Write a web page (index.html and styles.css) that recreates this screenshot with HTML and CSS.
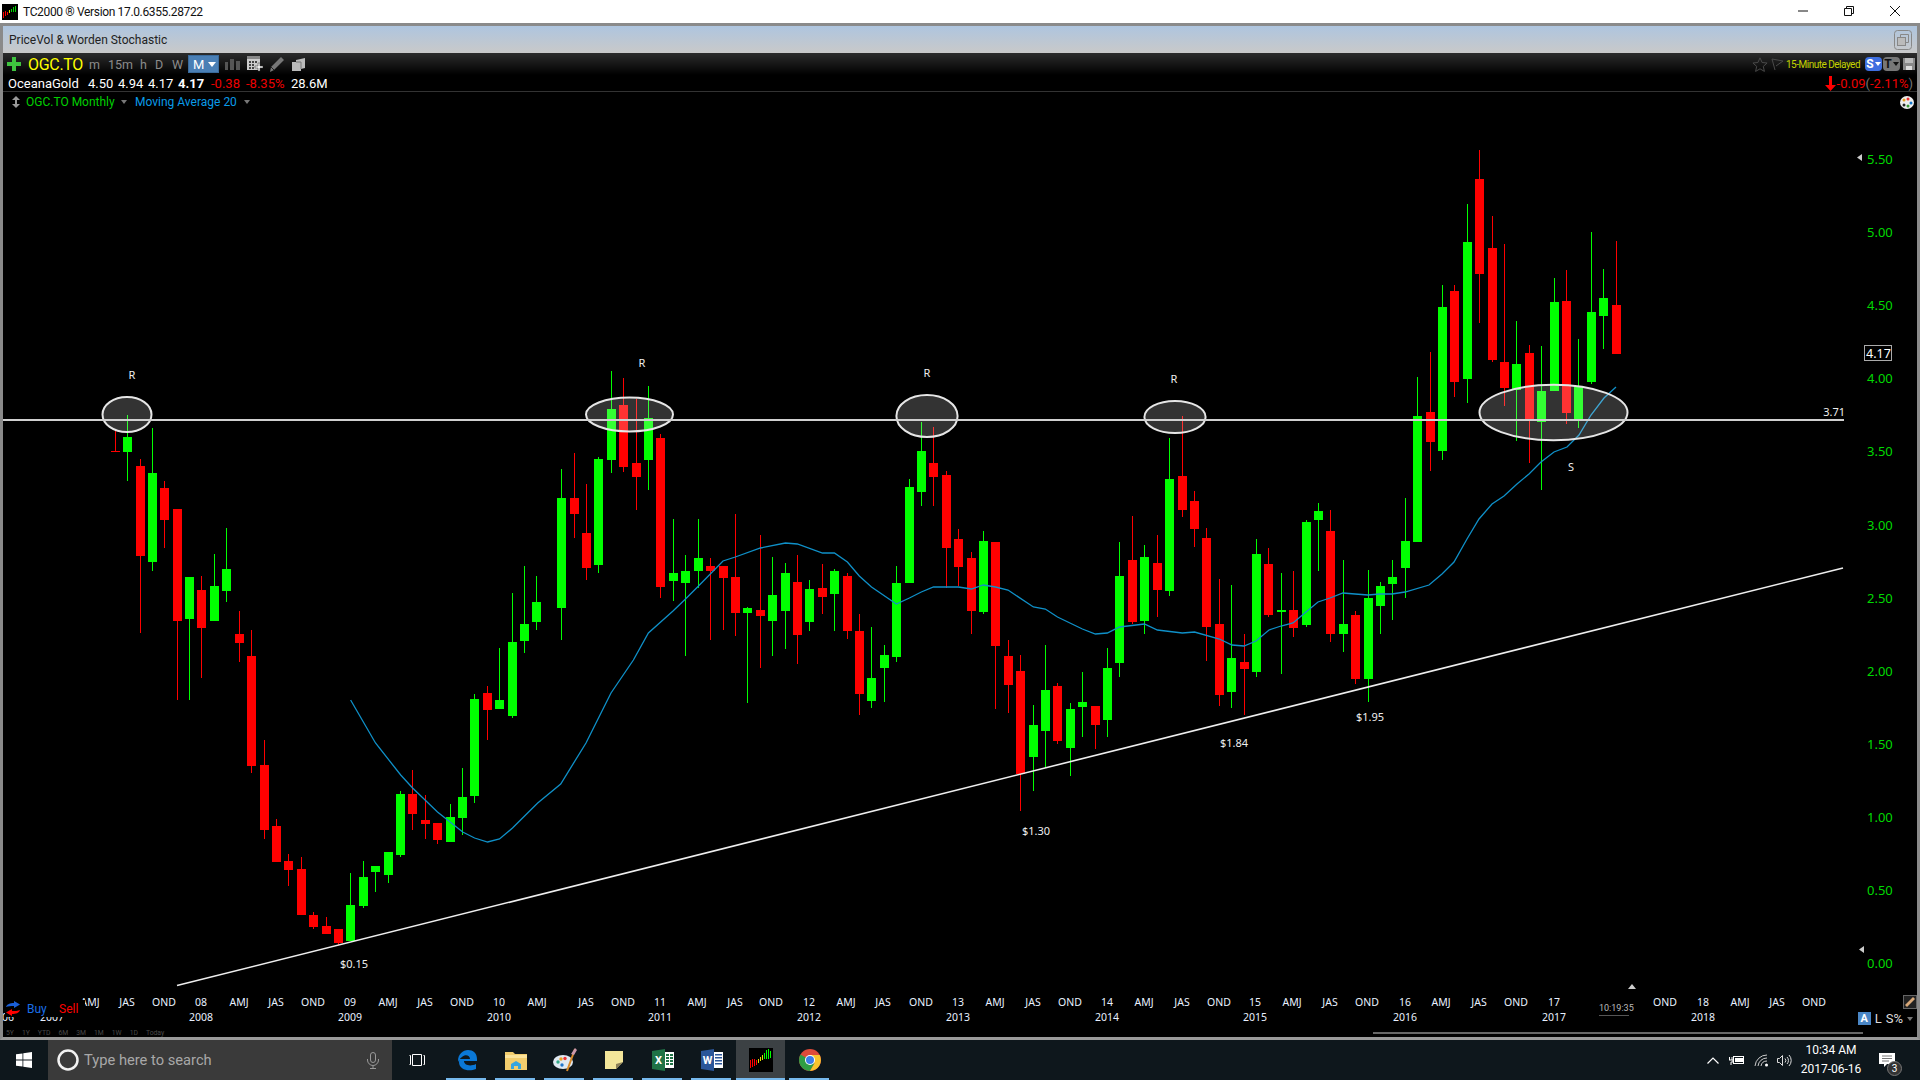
FILE: index.html
```html
<!DOCTYPE html>
<html lang="en">
<head>
<meta charset="utf-8">
<title>TC2000</title>
<link rel="stylesheet" href="styles.css">
</head>
<body>
<header class="titlebar">
  <svg class="app-icon" width="16" height="16" viewBox="0 0 16 16"><rect width="16" height="16" fill="#000"/><path d="M1 8h1v6H1zM3 7h1v5H3zM5 8h1v3H5z" fill="#f00"/><path d="M7 6h1v3H7z" fill="#dd0"/><path d="M9 5h1v3H9zM11 3h1v5h-1zM13 2h1v6h-1z" fill="#0d0"/></svg>
  <span class="app-title">TC2000 ® Version 17.0.6355.28722</span>
  <div class="win-controls">
    <svg width="12" height="12" viewBox="0 0 12 12"><path d="M1 6h10" stroke="#111" fill="none"/></svg>
    <svg width="12" height="12" viewBox="0 0 12 12"><path d="M1.500 3.500h7v7h-7zM3.500 3.500v-2h7v7h-2" stroke="#111" fill="none"/></svg>
    <svg width="12" height="12" viewBox="0 0 12 12"><path d="M1 1l10 10M11 1L1 11" stroke="#111" fill="none"/></svg>
  </div>
</header>

<main class="window">
  <div class="panel-head">
    <span>PriceVol &amp; Worden Stochastic</span>
    <svg class="panel-btn" width="18" height="20" viewBox="0 0 18 20"><rect x=".5" y=".5" width="17" height="19" rx="3" fill="none" stroke="#888"/><path d="M6.500 4.500h8v8h-8z" fill="none" stroke="#888"/><rect x="3.500" y="7.500" width="8" height="8" fill="#bbb" stroke="#888"/></svg>
  </div>

  <div class="tool-row">
    <svg class="plus" width="14" height="14" viewBox="0 0 14 14"><path d="M5 0h4v5h5v4H9v5H5V9H0V5h5z" fill="#3fc43f"/></svg>
    <span class="symbol">OGC.TO</span>
    <span class="tf tf-m">m</span>
    <span class="tf tf-15">15m</span>
    <span class="tf tf-h">h</span>
    <span class="tf tf-d">D</span>
    <span class="tf tf-w">W</span>
    <span class="tf-active">M<i class="caret-white"></i></span>
    <svg class="ic-bars" width="15" height="11" viewBox="0 0 15 11"><path d="M0 3h3v8H0zM5 0h4v11H5zM11 2h4v9h-4z" fill="#555"/></svg>
    <svg class="ic-cal" width="16" height="16" viewBox="0 0 16 16"><rect x="0" y="0" width="13" height="14" fill="#ccc"/><rect x="0" y="0" width="13" height="3" fill="#888"/><path d="M2 5h2v2H2zM5 5h2v2H5zM8 5h2v2H8zM2 8h2v2H2zM5 8h2v2H5zM2 11h2v2H2zM5 11h2v2H5z" fill="#444"/><path d="M11 7h2v3h3v2h-3v3h-2v-3H8v-2h3z" fill="#eee" stroke="#333" stroke-width=".5"/></svg>
    <svg class="ic-pen" width="14" height="15" viewBox="0 0 14 15"><path d="M11 0l3 3L4 13l-4 2 1-5z" fill="#777"/><path d="M1 10l3 3" stroke="#222"/></svg>
    <svg class="ic-folder" width="14" height="13" viewBox="0 0 14 13"><path d="M0 4h4V2l9-2v10l-4 1v2H0z" fill="#bbb"/><path d="M4 4h5v7" stroke="#777" fill="none"/></svg>
    <div class="tool-right">
      <svg class="ic-star" width="16" height="15" viewBox="0 0 16 15"><path d="M8 .8l2.100 4.700 5 .5-3.800 3.400 1.100 5L8 11.800l-4.400 2.600 1.100-5L.9 6l5-.5z" fill="none" stroke="#4a4a4a"/></svg>
      <svg class="ic-flag" width="13" height="13" viewBox="0 0 13 13"><path d="M1 1l11 2-7 5M1 1l3 11" fill="none" stroke="#4a4a4a"/></svg>
      <span class="delayed">15-Minute Delayed</span>
      <span class="btn-s">S<i class="caret-white small"></i></span>
      <span class="btn-t">T<i class="caret-dark small"></i></span>
      <svg class="ic-save" width="12" height="12" viewBox="0 0 12 12"><path d="M0 0h12v12H0z" fill="#888"/><path d="M2 0h8v5H2z" fill="#bbb"/><path d="M3 8h6v4H3z" fill="#ddd"/></svg>
    </div>
  </div>

  <div class="quote-row">
    <span class="q-name">OceanaGold</span>
    <span class="q">4.50</span>
    <span class="q">4.94</span>
    <span class="q">4.17</span>
    <strong class="q-last">4.17</strong>
    <span class="q-red q-chg">-0.38</span>
    <span class="q-red q-pct">-8.35%</span>
    <span class="q-vol">28.6M</span>
    <div class="quote-right">
      <svg width="11" height="15" viewBox="0 0 11 15"><path d="M4 0h3v9h4l-5.500 6L0 9h4z" fill="#f00"/></svg>
      <span class="q-red q-ext">-0.09<span class="paren">(</span>-2.11%<span class="paren">)</span></span>
    </div>
  </div>

  <section class="chart">
    <svg id="plot" class="plot" width="1914" height="945" viewBox="3 92 1914 945"></svg>

    <div class="legend">
      <svg width="8" height="12" viewBox="0 0 8 12"><path d="M4 0l4 4H5v4h3l-4 4-4-4h3V4H0z" fill="#999"/></svg>
      <span class="leg-price">OGC.TO Monthly</span><i class="caret-gray"></i>
      <span class="leg-ma">Moving Average 20</span><i class="caret-gray"></i>
    </div>

    <svg class="palette-btn" width="14" height="13" viewBox="0 0 14 13"><ellipse cx="7" cy="6.500" rx="7" ry="6.500" fill="#eee"/><circle cx="4" cy="4" r="1.500" fill="#e6a020"/><circle cx="8" cy="3" r="1.500" fill="#e33"/><circle cx="11" cy="7" r="1.500" fill="#17c"/><circle cx="8" cy="10" r="1.500" fill="#393"/><circle cx="4" cy="9" r="1.500" fill="#222"/></svg>

    <div class="trade">
      <svg width="16" height="15" viewBox="0 0 16 15"><path d="M1 6c1-3 4-4 8-4V0l6 3.500L9 7V5C6 5 3 5 1 6z" fill="#1a5fd8"/><path d="M15 9c-1 3-4 4-8 4v2L1 11.500 7 8v2c3 0 6 0 8-1z" fill="#f00"/></svg>
      <span class="buy">Buy</span>
      <span class="sell">Sell</span>
    </div>

    <div class="periods"><span>5Y</span><span>1Y</span><span>YTD</span><span>6M</span><span>3M</span><span>1M</span><span>1W</span><span>1D</span><span>Today</span></div>

    <div class="clock">10:19:35</div>

    <svg class="ruler" width="14" height="14" viewBox="0 0 14 14"><rect x=".5" y=".5" width="13" height="13" fill="#222" stroke="#666"/><path d="M2 10l8-8 2 2-8 8z" fill="#d8a878"/></svg>

    <div class="scale-mode"><span class="mode-a">A</span><span>L</span><span>S%</span><i class="caret-gray"></i></div>
    <div class="hscroll"></div>
  </section>
</main>

<footer class="taskbar">
  <div class="start">
    <svg width="16" height="16" viewBox="0 0 16 16"><path d="M0 2.300l6.500-.9v6.200H0zM7.300 1.300L16 0v7.600H7.300zM0 8.400h6.500v6.200L0 13.700zM7.300 8.400H16V16l-8.700-1.300z" fill="#fff"/></svg>
  </div>
  <div class="search">
    <svg class="cortana" width="22" height="22" viewBox="0 0 22 22"><circle cx="11" cy="11" r="9.500" fill="none" stroke="#f2f2f2" stroke-width="2.500"/></svg>
    <span class="search-text">Type here to search</span>
    <svg class="mic" width="12" height="17" viewBox="0 0 12 17"><rect x="3.500" y=".5" width="5" height="10" rx="2.500" fill="none" stroke="#999"/><path d="M.5 7v1a5.500 5.500 0 0 0 11 0V7M6 14v2.500M3 16.500h6" fill="none" stroke="#999"/></svg>
  </div>
  <div class="taskview">
    <svg width="16" height="12" viewBox="0 0 16 12"><path d="M.5 1.500h1v9h-1M3.500.5h9v11h-9zM14.500 1.500h1v9h-1" fill="none" stroke="#fff"/></svg>
  </div>
  <div class="tasks">
    <div class="task running">
      <svg width="22" height="22" viewBox="0 0 22 22"><path d="M2 12C2 5 7 1 12 1c5 0 9 3 9 9v2H8c0 4 6 6 12 3v5c-7 3-17 1-17-7 0-3 1-5 3-7-1.500 2-2 3-2 4h10c0-4-5-5-8-2-2 1-3 3-4 5z" fill="#0a78d7"/></svg>
    </div>
    <div class="task running">
      <svg width="22" height="19" viewBox="0 0 22 19"><path d="M0 1h8l2 2h12v16H0z" fill="#f2cd6d"/><path d="M0 4h22v3H0z" fill="#fbe39a"/><path d="M6 18v-5l5-3 5 3v5h-3v-3H9v3z" fill="#35a5e0"/></svg>
    </div>
    <div class="task running">
      <svg width="24" height="24" viewBox="0 0 24 24"><ellipse cx="10" cy="14" rx="10" ry="7" fill="#dfe9f2"/><circle cx="5" cy="14" r="1.700" fill="#3a8"/><circle cx="8" cy="11" r="1.700" fill="#e8a020"/><circle cx="12" cy="10.500" r="1.700" fill="#e33"/><circle cx="9" cy="17" r="1.700" fill="#27c"/><path d="M22 1l-8 22" stroke="#d88a2a" stroke-width="2"/><path d="M22 0l2 2-3 5-3-1z" fill="#c9a"/></svg>
    </div>
    <div class="task running">
      <svg width="18" height="18" viewBox="0 0 18 18"><path d="M0 0h18v11l-7 7H0z" fill="#f3e69a"/><path d="M18 11l-7 7v-5z" fill="#8c8058"/></svg>
    </div>
    <div class="task running">
      <svg width="22" height="22" viewBox="0 0 22 22"><path d="M0 2l13-2v22L0 20z" fill="#1f7246"/><path d="M13 3h9v16h-9z" fill="#fff"/><path d="M14 5h3v2h-3zM18 5h3v2h-3zM14 8h3v2h-3zM18 8h3v2h-3zM14 11h3v2h-3zM18 11h3v2h-3zM14 14h3v2h-3zM18 14h3v2h-3z" fill="#1f7246"/><text x="6.500" y="15" class="ms-letter">X</text></svg>
    </div>
    <div class="task running">
      <svg width="22" height="22" viewBox="0 0 22 22"><path d="M0 2l13-2v22L0 20z" fill="#2b5699"/><path d="M13 3h9v16h-9z" fill="#fff"/><path d="M14 5h7v1.500h-7zM14 8h7v1.500h-7zM14 11h7v1.500h-7zM14 14h7v1.500h-7z" fill="#2b5699"/><text x="6.500" y="15" class="ms-letter">W</text></svg>
    </div>
    <div class="task active">
      <svg width="24" height="24" viewBox="0 0 24 24"><rect width="24" height="24" fill="#000"/><path d="M1 12h1v8H1zM3 11h1v8H3zM5 11h1v7H5zM7 12h1v5H7z" fill="#f00"/><path d="M9 11h1v4H9zM11 9h1v4h-1z" fill="#dd0"/><path d="M13 7h1v5h-1z" fill="#dd0"/><path d="M15 5h1v6h-1zM17 2h1v9h-1zM19 1h1v10h-1zM21 3h1v7h-1z" fill="#0f0"/></svg>
    </div>
    <div class="task running">
      <svg width="22" height="22" viewBox="0 0 22 22"><circle cx="11" cy="11" r="11" fill="#de4b3a"/><path d="M11 11L1.500 5.500A11 11 0 0 0 11 22l4.500-7.800z" fill="#2f9e44"/><path d="M11 6h9.700A11 11 0 0 1 11 22l4.500-7.800z" fill="#f7c52c"/><circle cx="11" cy="11" r="5" fill="#fff"/><circle cx="11" cy="11" r="4" fill="#3b7de8"/></svg>
    </div>
  </div>
  <div class="tray">
    <svg class="chev" width="12" height="7" viewBox="0 0 12 7"><path d="M.5 6.500L6 1l5.500 5.500" fill="none" stroke="#fff" stroke-width="1.200"/></svg>
    <svg class="batt" width="16" height="10" viewBox="0 0 16 10"><path d="M.5 2v3M3 2v3M0 5h4v2H2v3" stroke="#fff" fill="none"/><rect x="4.500" y="1.500" width="10" height="7" fill="none" stroke="#fff"/><rect x="6" y="3" width="8" height="4" fill="#fff"/></svg>
    <svg class="wifi" width="16" height="13" viewBox="0 0 16 13"><path d="M1 12A12 12 0 0 1 13 1M4 12a9 9 0 0 1 9-8M7 12a6 6 0 0 1 6-5" fill="none" stroke="#ccc"/><circle cx="12.500" cy="11" r="1.500" fill="#fff"/></svg>
    <svg class="vol" width="16" height="13" viewBox="0 0 16 13"><path d="M.5 4.500h2l3-3v10l-3-3h-2zM8 4.500a3 3 0 0 1 0 4M10 3a5 5 0 0 1 0 7M12 1a8 8 0 0 1 0 11" fill="none" stroke="#ddd"/></svg>
    <div class="datetime"><span>10:34 AM</span><span>2017-06-16</span></div>
    <div class="notif">
      <svg width="16" height="15" viewBox="0 0 16 15"><path d="M0 0h16v11H8l-3 3v-3H0z" fill="#fff"/><path d="M3 3h10M3 5.500h10M3 8h7" stroke="#777"/></svg>
      <span class="badge">3</span>
    </div>
  </div>
</footer>
<script src="script.js"></script>
</body>
</html>
```

FILE: styles.css
```css
* { box-sizing: border-box; }
html, body { margin: 0; padding: 0; height: 100%; overflow: hidden; }
body { width: 1920px; height: 1080px; display: flex; flex-direction: column; background: #000; font-family: Roboto, "Noto Sans", sans-serif; }
i { display: inline-block; }

.titlebar { height: 23px; flex: none; background: #fff; display: flex; align-items: center; padding-left: 2px; }
.app-title { margin-left: 5px; font-size: 12px; letter-spacing: -.35px; color: #111; white-space: nowrap; }
.win-controls { margin-left: auto; display: flex; gap: 34px; padding: 0 19px 2px 0; }

.window { flex: 1; display: flex; flex-direction: column; min-height: 0; border: 3px solid #8a8a8a; border-bottom-color: #9a9a9a; background: #000; }

.panel-head { height: 27px; flex: none; display: flex; align-items: center; justify-content: space-between; padding: 0 5px 0 6px; font-size: 12px; color: #222; background: linear-gradient(#aec5df, #c9c9c9); }

.tool-row { height: 22px; flex: none; display: flex; align-items: center; padding-left: 4px; background: linear-gradient(#2c2c2c, #000); color: #999; font-size: 12.500px; }
.plus { flex: none; }
.symbol { margin-left: 7px; font-size: 16px; color: #ffff00; width: 61px; white-space: nowrap; letter-spacing: -.3px; }
.tf { color: #8c8c8c; white-space: nowrap; }
.tf-m { width: 19px; }
.tf-15 { width: 32px; }
.tf-h { width: 15px; }
.tf-d { width: 17px; }
.tf-w { width: 16px; }
.tf-active { width: 31px; height: 18px; background: #4a7fb5; color: #fff; display: flex; align-items: center; gap: 4px; padding-left: 4px; font-size: 13px; border: 1px solid #3a6a9a; }
.caret-white { width: 0; height: 0; border: 4px solid transparent; border-top: 5px solid #fff; border-bottom: 0; }
.caret-white.small, .caret-dark.small { border-width: 3px; border-top-width: 4px; border-bottom-width: 0; }
.caret-dark { width: 0; height: 0; border: 3px solid transparent; border-top: 4px solid #111; border-bottom: 0; }
.caret-gray { width: 0; height: 0; border: 3px solid transparent; border-top: 4px solid #777; border-bottom: 0; }
.ic-bars { margin-left: 6px; }
.ic-cal { margin-left: 7px; }
.ic-pen { margin-left: 7px; }
.ic-folder { margin-left: 8px; }
.tool-right { margin-left: auto; display: flex; align-items: center; padding-right: 2px; }
.ic-flag { margin-left: 3px; }
.delayed { margin-left: 2px; font-size: 10px; letter-spacing: -.5px; color: #c4d400; white-space: nowrap; width: 79px; }
.btn-s { width: 17px; height: 14px; border-radius: 4px; background: #3f6fe0; color: #fff; font-weight: 700; font-size: 12px; display: flex; align-items: center; justify-content: center; gap: 1px; }
.btn-t { margin-left: 1px; width: 17px; height: 14px; border-radius: 4px; background: #777; color: #111; font-weight: 700; font-size: 12px; display: flex; align-items: center; justify-content: center; gap: 1px; }
.ic-save { margin-left: 3px; }

.quote-row { height: 17px; flex: none; display: flex; align-items: center; padding: 0 4px 0 5px; font-size: 13px; color: #fff; border-bottom: 1px solid #333; white-space: nowrap; }
.q-name { width: 80px; }
.q { width: 30px; }
.q-last { width: 33px; font-weight: 700; }
.q-red { color: #e00; }
.q-chg { width: 35px; }
.q-pct { width: 45px; }
.quote-right { margin-left: auto; display: flex; align-items: center; gap: 1px; }
.paren { color: #777; }

.chart { position: relative; flex: 1; min-height: 0; overflow: hidden; background: #000; }
.plot { position: absolute; left: 0; top: 0; display: block; font-family: "Noto Sans", sans-serif; }
.up { fill: #00ff00; }
.dn { fill: #ff0000; }
.candles { shape-rendering: crispEdges; }
.hline { stroke: #d0d0d0; stroke-width: 2; shape-rendering: crispEdges; }
.tline { stroke: #eee; stroke-width: 1.600; }
.ma { fill: none; stroke: #0f90c8; stroke-width: 1.300; }
.zone { fill: rgba(255, 255, 255, .2); stroke: #e6e6e6; stroke-width: 2; }
.note { fill: #eee; font-size: 11px; text-anchor: middle; }
.note-end { fill: #eee; font-size: 11px; text-anchor: end; }
.ax { fill: #e8f0ff; font-size: 10.500px; text-anchor: middle; }
.ay { fill: #00d800; font-size: 13px; }
.box-lbl { fill: #fff; font-size: 12.500px; }
.box { fill: none; stroke: #aaa; }
.marker { fill: #ccc; }

.legend { position: absolute; left: 9px; top: 3px; display: flex; align-items: center; font-size: 12px; white-space: nowrap; }
.leg-price { margin-left: 6px; width: 95px; color: #00d000; }
.leg-ma { margin-left: 8px; width: 109px; color: #0a9be8; }
.palette-btn { position: absolute; right: 3px; top: 4px; }

.trade { position: absolute; left: 2px; top: 908px; width: 80px; height: 17px; background: #000; display: flex; align-items: center; font-size: 12px; white-space: nowrap; }
.buy { margin-left: 6px; width: 26px; color: #1a6fe8; }
.sell { margin-left: 6px; color: #f00; }

.periods { position: absolute; left: 3px; top: 937px; display: flex; gap: 8px; font-size: 6.800px; color: #4a4a4a; white-space: nowrap; }
.clock { position: absolute; left: 1596px; top: 910px; width: 30px; font-size: 9px; line-height: 13px; color: #bbb; text-align: center; border-bottom: 1px solid #555; }
.ruler { position: absolute; right: 0; top: 903px; }
.scale-mode { position: absolute; right: 4px; top: 919px; display: flex; align-items: center; gap: 4px; font-size: 13px; color: #ddd; white-space: nowrap; }
.mode-a { width: 13px; height: 13px; background: #4a86c5; color: #fff; font-size: 11px; font-weight: 700; display: flex; align-items: center; justify-content: center; }
.hscroll { position: absolute; left: 1370px; top: 940px; width: 490px; height: 2px; background: #666; }

.taskbar { height: 40px; flex: none; display: flex; align-items: stretch; background: #0e171c; }
.start { width: 48px; display: flex; align-items: center; justify-content: center; }
.search { width: 344px; background: #3a3a3a; display: flex; align-items: center; padding-left: 9px; }
.search-text { margin-left: 5px; font-size: 14.700px; color: #a8a8a8; white-space: nowrap; }
.mic { margin-left: auto; margin-right: 13px; }
.taskview { width: 49px; display: flex; align-items: center; justify-content: center; }
.tasks { display: flex; margin-left: 1px; }
.task { width: 49px; display: flex; align-items: center; justify-content: center; position: relative; }
.task.running::after { content: ""; position: absolute; left: 4px; right: 5px; bottom: 0; height: 2px; background: #76b9ed; }
.task.active { background: #3c4144; }
.task.active::after { content: ""; position: absolute; left: 0; right: 0; bottom: 0; height: 2px; background: #76b9ed; }
.ms-letter { fill: #fff; font-size: 11px; font-weight: 700; text-anchor: middle; }

.tray { margin-left: auto; display: flex; align-items: center; color: #fff; }
.chev { margin-right: 10px; }
.wifi { margin-left: 9px; }
.vol { margin-left: 7px; }
.datetime { width: 76px; display: flex; flex-direction: column; align-items: center; font-size: 12px; line-height: 19px; }
.notif { position: relative; margin-left: 10px; margin-right: 25px; width: 16px; height: 15px; }
.badge { position: absolute; left: 8px; top: 8px; width: 15px; height: 15px; border-radius: 50%; background: #333; border: 1px solid #777; font-size: 10px; line-height: 13px; text-align: center; color: #fff; }
```

FILE: script.js
```js
var candles = "r115 431 451 451 452,g127 415 481 437 452,r140 459 633 466 556,g152 428 571 473 562,r164 481 548 488 520,r177 509 700 509 621,g189 577 700 577 619,r201 576 678 590 628,g214 554 621 586 621,g226 528 602 569 591,r239 611 662 634 643,r251 630 773 656 766,r264 740 839 765 830,r276 819 862 826 862,r288 854 886 861 870,r301 857 915 869 915,r313 912 929 915 927,r326 917 934 926 934,r338 929 945 929 943,g350 873 941 905 941,g363 861 908 877 906,g375 866 892 866 872,g388 852 883 852 875,g400 791 857 794 855,r412 770 830 794 814,r425 795 839 820 824,r437 823 844 823 840,g450 804 842 817 842,g462 768 835 797 818,g474 694 803 699 796,r487 686 740 693 710,g499 648 709 700 709,g512 593 718 642 716,g524 566 653 624 641,g536 576 630 602 622,g561 469 640 498 608,r574 453 538 498 514,r586 484 580 533 568,g598 457 573 459 565,g611 371 473 409 460,r623 378 472 405 467,r636 399 510 463 477,g648 386 490 418 460,r660 434 598 438 587,g673 519 601 573 581,g685 555 656 571 583,g698 519 588 558 571,r710 558 640 566 571,r723 566 630 566 578,r735 514 636 577 613,g747 607 703 608 613,r760 535 668 610 616,g772 557 656 595 621,g785 563 649 573 611,r797 555 664 582 635,g809 580 631 589 622,r822 564 614 588 597,g834 569 631 571 594,r847 573 639 576 631,r859 614 715 631 694,g871 627 708 678 701,g884 645 702 655 668,g896 566 662 583 657,g909 479 583 487 583,g921 422 506 451 492,r933 427 506 463 477,r946 471 588 475 548,r958 529 586 539 567,r971 552 634 558 611,g983 531 614 541 612,r995 542 709 542 646,r1008 640 713 656 685,r1020 655 811 671 774,g1033 705 791 725 757,g1045 645 768 690 731,r1057 683 744 686 741,g1070 703 776 709 748,g1082 672 737 702 707,r1095 706 749 706 725,g1107 648 737 668 720,g1119 542 677 576 663,r1132 516 624 560 622,g1144 545 634 557 621,r1157 535 617 563 590,g1169 438 596 479 591,r1182 416 517 476 510,r1194 491 547 501 529,r1206 528 661 538 627,r1219 579 706 624 695,g1231 585 708 658 692,r1244 634 715 662 669,g1256 539 677 554 672,r1268 548 617 564 615,g1281 573 674 610 612,r1293 571 637 610 628,g1306 520 627 522 625,g1318 503 571 511 520,r1330 510 642 531 634,g1343 560 652 624 634,r1355 611 684 615 679,g1368 570 702 598 679,g1380 582 634 586 606,g1392 560 620 577 584,g1405 498 598 541 568,g1417 377 542 416 542,r1430 352 471 412 442,g1442 285 460 307 451,r1454 285 397 291 382,g1467 204 403 242 379,r1479 150 323 179 274,r1492 216 362 248 360,r1504 244 406 362 388,g1516 321 441 364 390,r1529 345 463 353 419,g1541 346 490 391 422,g1554 278 391 302 391,r1566 270 424 301 413,g1578 339 428 386 419,g1591 232 384 312 382,g1603 269 349 298 316,r1616 241 354 305 354";

var ma = "350.6,700 375.5,743 400.7,775 412.6,788 437.5,812 462.7,832 474.6,838 487.6,842 499.5,839 512.5,828 537.7,803 560.7,784 586,743 611,693 633.4,660 648.4,633 673,611 685.5,599 698.5,586 723,561 735.3,557 760.5,548 785.4,543 797.3,544 822.5,553 834.4,553 847.4,562 859.3,576 871.5,587 896.4,604 909.4,598 921.3,592 933.5,587 958.4,587 971.4,589 983.3,585 995.5,587 1008,590 1033.4,607 1045.3,609 1057.5,617 1082.4,629 1095.4,634 1107.3,633 1119.5,627 1144.4,624 1157.4,630 1182.3,633 1194.5,632 1219.4,639 1232,645 1244,646 1256,641 1269,630 1281,626 1293,623 1306,612 1318,602 1330,598 1343,593 1355,594 1368,595 1380,594 1392,594 1405,592 1429,585 1442,574 1454,562 1467,539 1479,519 1492,504 1504,496 1517,484 1529,474 1541,462 1554,452 1567,447 1579,435 1591,415 1604,398 1616,387";

var zones = [[127, 414.5, 24.5, 17.5], [629.5, 414.5, 43.5, 17], [927, 416, 30.6, 21], [1175, 417, 30.6, 16], [1553.5, 412.5, 74, 27.7]];

var notes = [["R", 132, 379], ["R", 642, 367], ["R", 927, 377], ["R", 1174, 383], ["S", 1571, 471], ["$0.15", 354, 968], ["$1.30", 1036, 835], ["$1.84", 1234, 747], ["$1.95", 1370, 721]];

var xTop = [["AMJ", 90], ["JAS", 127], ["OND", 164], ["08", 201], ["AMJ", 239], ["JAS", 276], ["OND", 313], ["09", 350], ["AMJ", 388], ["JAS", 425], ["OND", 462], ["10", 499], ["AMJ", 537], ["JAS", 586], ["OND", 623], ["11", 660], ["AMJ", 697], ["JAS", 735], ["OND", 771], ["12", 809], ["AMJ", 846], ["JAS", 883], ["OND", 921], ["13", 958], ["AMJ", 995], ["JAS", 1033], ["OND", 1070], ["14", 1107], ["AMJ", 1144], ["JAS", 1182], ["OND", 1219], ["15", 1255], ["AMJ", 1292], ["JAS", 1330], ["OND", 1367], ["16", 1405], ["AMJ", 1441], ["JAS", 1479], ["OND", 1516], ["17", 1554], ["OND", 1665], ["18", 1703], ["AMJ", 1740], ["JAS", 1777], ["OND", 1814]];

var xBottom = [["06", 8], ["2007", 52], ["2008", 201], ["2009", 350], ["2010", 499], ["2011", 660], ["2012", 809], ["2013", 958], ["2014", 1107], ["2015", 1255], ["2016", 1405], ["2017", 1554], ["2018", 1703]];

var yAxis = ["5.50", "5.00", "4.50", "4.00", "3.50", "3.00", "2.50", "2.00", "1.50", "1.00", "0.50", "0.00"];

var parts = ['<g class="candles">'];
candles.split(",").forEach(function (c) {
  var cls = c[0] === "g" ? "up" : "dn";
  var v = c.slice(1).split(" ").map(Number);
  parts.push('<rect class="' + cls + '" x="' + v[0] + '" y="' + v[1] + '" width="1" height="' + (v[2] - v[1]) + '"/>');
  parts.push('<rect class="' + cls + '" x="' + (v[0] - 4) + '" y="' + v[3] + '" width="9" height="' + (v[4] - v[3]) + '"/>');
});
parts.push("</g>");

parts.push('<polyline class="ma" points="' + ma + '"/>');
zones.forEach(function (z) {
  parts.push('<ellipse class="zone" cx="' + z[0] + '" cy="' + z[1] + '" rx="' + z[2] + '" ry="' + z[3] + '"/>');
});
parts.push('<line class="hline" x1="3" y1="420" x2="1844" y2="420"/>');
parts.push('<line class="tline" x1="177" y1="985.5" x2="1843" y2="568"/>');
parts.push('<text class="note-end" x="1845" y="416">3.71</text>');

notes.forEach(function (n) {
  parts.push('<text class="note" x="' + n[1] + '" y="' + n[2] + '">' + n[0] + "</text>");
});
xTop.forEach(function (t) {
  parts.push('<text class="ax" x="' + t[1] + '" y="1006">' + t[0] + "</text>");
});
xBottom.forEach(function (t) {
  parts.push('<text class="ax" x="' + t[1] + '" y="1021">' + t[0] + "</text>");
});
yAxis.forEach(function (t, i) {
  parts.push('<text class="ay" x="1867" y="' + Math.round(163.8 + i * 73.15) + '">' + t + "</text>");
});
parts.push('<rect class="box" x="1864.5" y="345.5" width="27" height="15"/>');
parts.push('<text class="box-lbl" x="1866" y="358">4.17</text>');
parts.push('<path class="marker" d="M1862 154v7l-5-3.500zM1864 946v7l-5-3.500zM1632 984l4 5h-8z"/>');

document.getElementById("plot").innerHTML = parts.join("");
```
